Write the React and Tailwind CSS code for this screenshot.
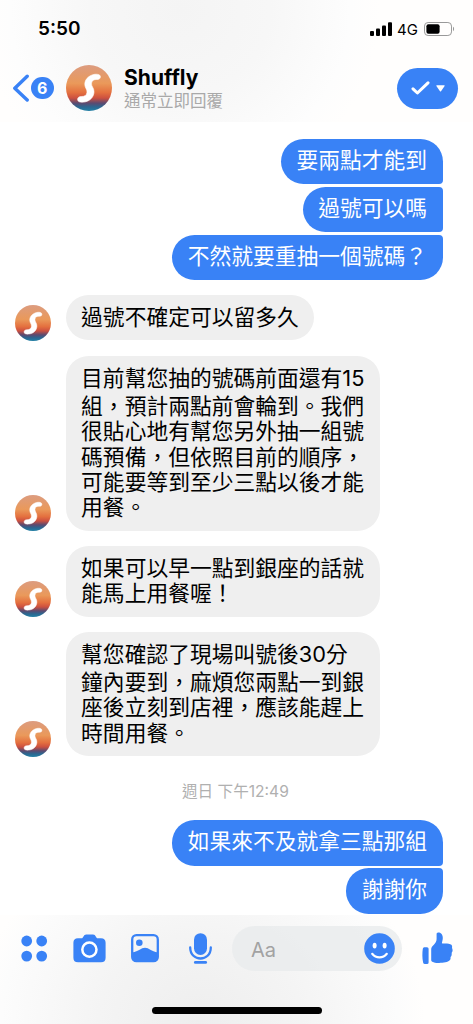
import React from 'react';

const messages = [
  { id: 1, from: 'me', lines: ['要兩點才能到'], shape: 'rounded-[22.6px] rounded-br-[4px]', gap: '' },
  { id: 2, from: 'me', lines: ['過號可以嗎'], shape: 'rounded-l-[22.6px] rounded-r-[4px]', gap: 'mt-[2.7px]' },
  { id: 3, from: 'me', lines: ['不然就要重抽一個號碼？'], shape: 'rounded-[22.6px] rounded-tr-[4px]', gap: 'mt-[2.7px]' },
  { id: 4, from: 'page', lines: ['過號不確定可以留多久'], gap: 'mt-[14.9px]' },
  {
    id: 5,
    from: 'page',
    lines: [
      '目前幫您抽的號碼前面還有15',
      '組，預計兩點前會輪到。我們',
      '很貼心地有幫您另外抽一組號',
      '碼預備，但依照目前的順序，',
      '可能要等到至少三點以後才能',
      '用餐。',
    ],
    gap: 'mt-[15.6px]',
  },
  { id: 6, from: 'page', lines: ['如果可以早一點到銀座的話就', '能馬上用餐喔！'], gap: 'mt-[15.6px]' },
  {
    id: 7,
    from: 'page',
    lines: ['幫您確認了現場叫號後30分', '鐘內要到，麻煩您兩點一到銀', '座後立刻到店裡，應該能趕上', '時間用餐。'],
    gap: 'mt-[15.2px]',
  },
  { id: 8, from: 'time', text: '週日 下午12:49' },
  { id: 9, from: 'me', lines: ['如果來不及就拿三點那組'], shape: 'rounded-[22.6px] rounded-br-[4px]', gap: '' },
  { id: 10, from: 'me', lines: ['謝謝你'], shape: 'rounded-[22.6px] rounded-tr-[4px]', gap: 'mt-[2.7px]' },
];

const Avatar = ({ className }) => (
  <svg viewBox="0 0 46 46" className={`shrink-0 ${className}`}>
    <defs>
      <linearGradient id="sunset" x1="0" y1="0" x2="0" y2="1">
        <stop offset="0" stopColor="#dc9c80" />
        <stop offset="0.4" stopColor="#ea995a" />
        <stop offset="0.6" stopColor="#e4703f" />
        <stop offset="0.72" stopColor="#cc5040" />
        <stop offset="0.83" stopColor="#5c4a70" />
        <stop offset="0.91" stopColor="#2d6690" />
        <stop offset="1" stopColor="#2280a5" />
      </linearGradient>
    </defs>
    <circle cx="23" cy="23" r="23" fill="url(#sunset)" />
    <path
      d="M34.4 11.6C34.2 9.2 30.4 8.8 27.4 9.6C22 11 18.8 15 18.8 19.3C18.8 22.8 21.2 24.2 21 27.2C20.7 30.4 18.6 31.6 15.2 31.5C12.8 31.5 11.4 33 11.6 34.7C11.8 36.9 14.8 37.5 17.8 37.1C23.8 36.4 27.8 32.2 28 27C28.1 22.7 25.2 21.6 25.5 18.2C25.7 15.4 28.3 14.3 30.8 14.5C33.2 14.7 34.5 13.4 34.4 11.6Z"
      fill="#fff"
      stroke="#fff"
      strokeWidth="0.6"
      strokeLinejoin="round"
    />
  </svg>
);

const Bubble = ({ message }) => {
  const mine = message.from === 'me';
  return (
    <div
      className={`text-[21.78px] whitespace-nowrap px-[15.6px] ${
        mine
          ? `bg-[#3982f6] pt-[9px] pb-[11px] text-white ${message.shape}`
          : 'rounded-[22.6px] bg-[#efefef] pt-[9.8px] pb-[10.2px] text-black'
      }`}
    >
      {message.lines.map((line) => (
        <div key={line} className={/\d/.test(line) ? 'h-[28.2px] leading-[25.3px]' : 'h-[25.3px] leading-[25.3px]'}>
          {line}
        </div>
      ))}
    </div>
  );
};

const StatusBar = () => (
  <div className="flex h-[58px] items-center justify-between pr-[18px] pl-[38px]">
    <span className="pt-px text-[19px] font-semibold">5:50</span>
    <div className="flex items-center">
      <svg width="23" height="14" viewBox="0 0 23 14">
        <rect x="0" y="9" width="4" height="5" rx="1" />
        <rect x="6" y="6.5" width="4" height="7.5" rx="1" />
        <rect x="12" y="3.5" width="4" height="10.5" rx="1" />
        <rect x="18" y="0.3" width="4" height="13.7" rx="1" />
      </svg>
      <span className="ml-1 text-[15px] leading-none">4G</span>
      <svg className="ml-[6px]" width="31" height="14" viewBox="0 0 31 14">
        <rect x="0.5" y="0.5" width="27" height="13" rx="3.6" fill="none" stroke="#999" />
        <rect x="2.4" y="2.3" width="13.2" height="9.4" rx="2" />
        <path d="M29 4.8c1.4.5 1.4 3.9 0 4.4z" fill="#999" />
      </svg>
    </div>
  </div>
);

const Header = () => (
  <header className="h-[122px] shrink-0 bg-[radial-gradient(ellipse_200px_190px_at_180px_10px,#f4f4f4_0%,#f7f7f7_45%,#fdfdfd_85%,#fffefd_100%)]">
    <StatusBar />
    <div className="flex h-[60px] items-center pr-[15px] pl-[12px]">
      <svg width="18" height="28" viewBox="0 0 18 28" fill="none" stroke="#3982f6" strokeWidth="3.4" strokeLinecap="round" strokeLinejoin="round">
        <path d="M15.2 2.2L2.8 14.2L15.2 26" />
      </svg>
      <div className="ml-px flex size-[22.6px] items-center justify-center rounded-full bg-[#3982f6] text-[16px] leading-none font-bold text-white">
        6
      </div>
      <Avatar className="ml-[12px] size-[46px]" />
      <div className="ml-[12.5px]">
        <div className="text-[21px] leading-[24px] font-bold">Shuffly</div>
        <div className="mt-px text-[16.5px] leading-[20px] text-[#a9a9a9]">通常立即回覆</div>
      </div>
      <button className="ml-auto flex h-[41px] w-[61px] items-center justify-center gap-[6px] rounded-full bg-[#3982f6]">
        <svg width="19" height="14" viewBox="0 0 19 14" fill="none" stroke="#fff" strokeWidth="3" strokeLinecap="round" strokeLinejoin="round">
          <path d="M2 7.8L6.4 12L17 1.8" />
        </svg>
        <svg width="9" height="7" viewBox="0 0 9 7" fill="#fff">
          <path d="M0.8 0.3H8.2Q9 0.3 8.6 1L5 6.3Q4.5 6.9 4 6.3L0.4 1Q0 0.3 0.8 0.3Z" />
        </svg>
      </button>
    </div>
  </header>
);

const Footer = () => (
  <footer className="h-[109px] shrink-0 bg-[radial-gradient(ellipse_225px_190px_at_200px_105px,#eeeeee_0%,#f4f4f4_45%,#fcfcfc_88%,#fffefd_100%)]">
    <div className="flex h-[67px] items-center pl-[21px]">
      <svg width="27" height="27" viewBox="0 0 27 27" fill="#3982f6">
        <circle cx="5.7" cy="6" r="5.4" />
        <circle cx="20.7" cy="6" r="5.4" />
        <circle cx="5.7" cy="21.1" r="5.4" />
        <circle cx="20.7" cy="21.1" r="5.4" />
      </svg>
      <svg className="ml-[25px]" width="33" height="29" viewBox="0 0 33 29">
        <path
          d="M5 4.2H8.5C10.5 4.2 10.3 0.4 13.3 0.4H20C23 0.4 22.8 4.2 24.8 4.2H28Q32.6 4.2 32.6 8.7V23.7Q32.6 28.2 28 28.2H5Q0.4 28.2 0.4 23.7V8.7Q0.4 4.2 5 4.2Z"
          fill="#3982f6"
        />
        <circle cx="16.4" cy="15.6" r="7.1" fill="none" stroke="#fff" strokeWidth="2.5" />
      </svg>
      <svg className="ml-[25px]" width="28" height="29" viewBox="0 0 28 29">
        <rect x="1.2" y="1.2" width="25.6" height="26" rx="4.2" fill="none" stroke="#3982f6" strokeWidth="2.3" />
        <path d="M1 18.6C8 17.3 10 13.8 14 13.8S20 17.3 27 18.6V24Q27 27.6 23 27.6H5Q1 27.6 1 24Z" fill="#3982f6" />
        <circle cx="8.3" cy="8.7" r="3.3" fill="#3982f6" />
      </svg>
      <svg className="ml-[30px]" width="23" height="32" viewBox="0 0 23 32">
        <rect x="5" y="0.2" width="13" height="21.7" rx="6.5" fill="#3982f6" />
        <path d="M1.2 14.4C1.2 29.2 21.8 29.2 21.8 14.4" fill="none" stroke="#3982f6" strokeWidth="2.3" strokeLinecap="round" />
        <path d="M6.3 29.4H16.7" stroke="#3982f6" strokeWidth="2.7" strokeLinecap="round" />
      </svg>
      <div className="ml-5 flex h-[45px] w-[170px] items-center justify-between rounded-full bg-[#e9ebec]/80 pr-[7px] pl-[19px]">
        <span className="pt-0.5 text-[20px] text-[#a2a2a2]">Aa</span>
        <svg width="31" height="31" viewBox="0 0 31 31">
          <circle cx="15.5" cy="15.5" r="15.3" fill="#3982f6" />
          <ellipse cx="10.6" cy="12.6" rx="2" ry="2.9" fill="#fff" />
          <ellipse cx="20.6" cy="12.6" rx="2" ry="2.9" fill="#fff" />
          <path d="M8.2 20.8C12 25.6 19 25.6 22.8 20.8" fill="none" stroke="#fff" strokeWidth="2.2" strokeLinecap="round" />
        </svg>
      </div>
      <svg className="ml-5" width="32" height="33" viewBox="0 0 32 33" fill="#3982f6">
        <path d="M2.2 15.2H5Q6.6 15.2 6.6 16.8V30.4Q6.6 32 5 32H3Q1.4 32 1.1 30.4C0.2 26 0.2 21 0.8 16.8Q1 15.2 2.2 15.2Z" />
        <path d="M9.2 17.2C9.2 13.8 14.6 12 14.6 7V2C14.6 -0.3 20.8 -0.3 20.8 6C20.8 8.6 19.6 10.7 20 11.3C20.5 12 29.4 10.7 30 13.8C30.3 15.2 29.8 15.7 30.2 16.6C30.6 17.5 31 19.5 29.8 20.6C29.5 21.2 30.2 23.5 28.6 25C28.4 25.7 29 27.4 27.4 28.6C25.7 31 15.4 31.6 12.1 30.4C10.7 29.9 9.2 29.6 9.2 28.2Z" />
      </svg>
    </div>
    <div className="mx-auto mt-[25px] h-[6.5px] w-[170px] rounded-full bg-black" />
  </footer>
);

const App = () => (
  <div className="flex h-[1024px] w-[473px] flex-col overflow-hidden bg-white font-[Inter,'Noto_Sans_CJK_TC',sans-serif] text-black">
    <Header />
    <main className="h-[793px] shrink-0 pt-[17px] pr-[30.3px] pl-[15px]">
      {messages.map((message) => {
        if (message.from === 'time') {
          return (
            <div key={message.id} className="mt-[25.4px] mb-[18.8px] ml-[167px] h-5 text-[15.6px] leading-5 whitespace-nowrap text-[#b0b0b0]">
              {message.text}
            </div>
          );
        }
        if (message.from === 'me') {
          return (
            <div key={message.id} className={`flex justify-end ${message.gap}`}>
              <Bubble message={message} />
            </div>
          );
        }
        return (
          <div key={message.id} className={`flex items-end gap-[14.5px] ${message.gap}`}>
            <Avatar className="-mb-[0.6px] size-[36px]" />
            <Bubble message={message} />
          </div>
        );
      })}
    </main>
    <Footer />
  </div>
);

export default App;
